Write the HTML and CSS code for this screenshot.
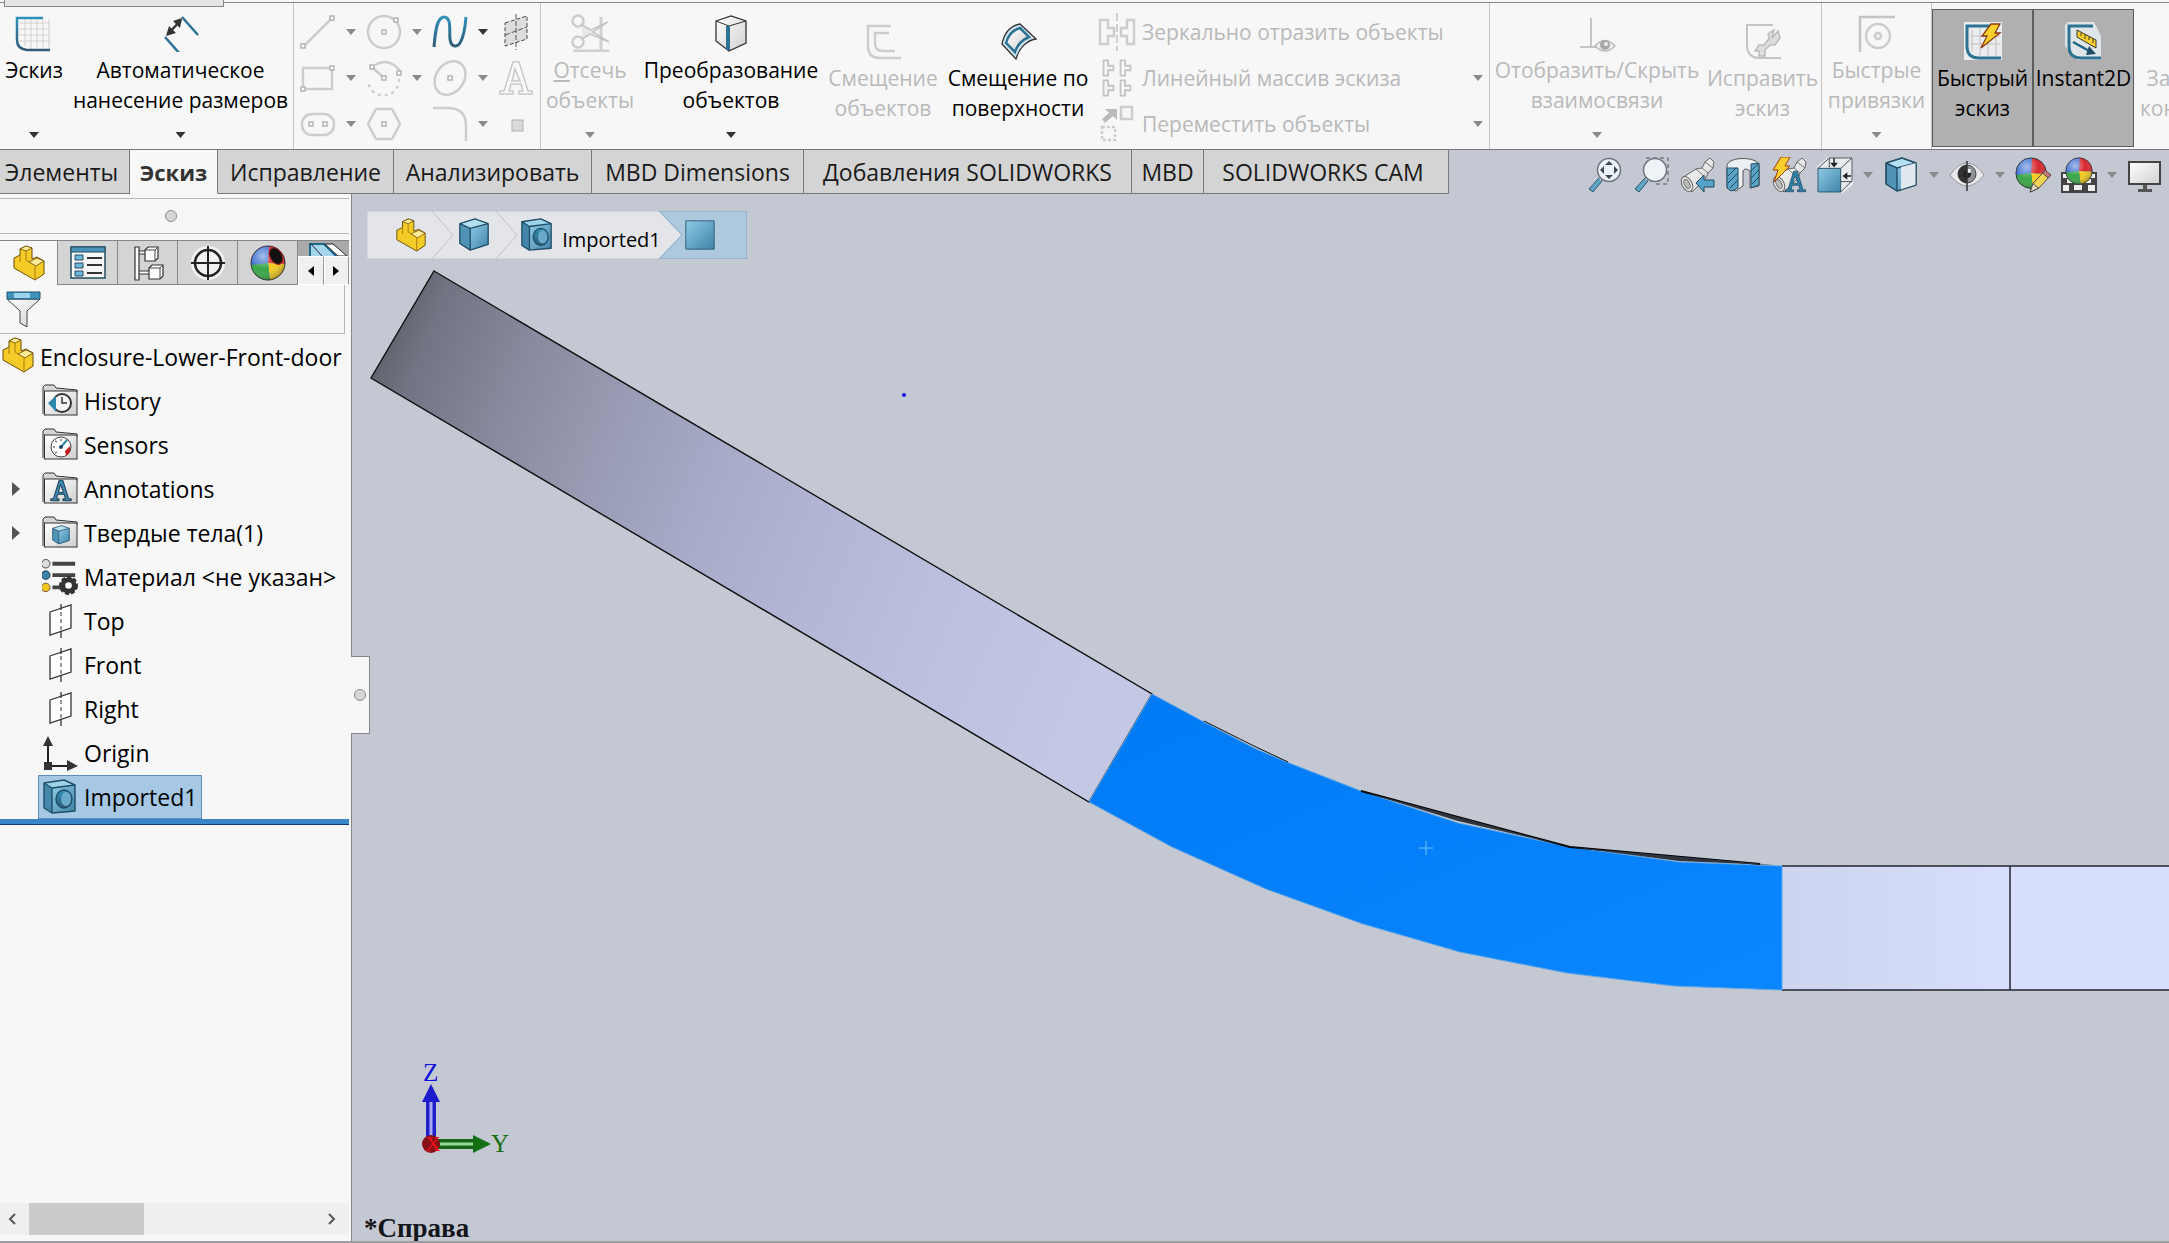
FILE: index.html
```html
<!DOCTYPE html>
<html lang="ru">
<head>
<meta charset="utf-8">
<title>SOLIDWORKS</title>
<link rel="stylesheet" href="styles.css">
</head>
<body>
<svg class="defs" aria-hidden="true">
  <defs>
    <linearGradient id="blue" x1="0" y1="0" x2="1" y2="1"><stop offset="0" stop-color="#8fcbe6"/><stop offset="1" stop-color="#3f83a8"/></linearGradient>
    <linearGradient id="stroke" x1="0" y1="0" x2="0" y2="1"><stop offset="0" stop-color="#3190b8"/><stop offset="1" stop-color="#2f5b76"/></linearGradient>
    <linearGradient id="grey" x1="0" y1="0" x2="1" y2="1"><stop offset="0" stop-color="#ffffff"/><stop offset="1" stop-color="#d0d0d0"/></linearGradient>
    <linearGradient id="yellow" x1="0" y1="0" x2="1" y2="1"><stop offset="0" stop-color="#ffe98a"/><stop offset="1" stop-color="#eab308"/></linearGradient>
    <radialGradient id="shine" cx="0.35" cy="0.3" r="0.8"><stop offset="0" stop-color="#fff" stop-opacity="0.55"/><stop offset="0.5" stop-color="#fff" stop-opacity="0"/><stop offset="1" stop-color="#000" stop-opacity="0.4"/></radialGradient>
  </defs>
  <symbol id="part" viewBox="0 0 36 36">
    <path d="M3 13l6-3V4l6-3 6 2v11l5-2 7 4v13l-9 6L3 23z" fill="#f5cb28" stroke="#6b4e08" stroke-linejoin="round"/>
    <path d="M9 4l6-3 6 2-6 3zM18 17l8-4 7 3-8 5z" fill="#ffeb96" stroke="#6b4e08" stroke-width="0.8"/>
    <path d="M9 10v7M15 6v9l3 2M24 21v14" fill="none" stroke="#a87d0c"/>
  </symbol>
  <symbol id="cube" viewBox="0 0 36 36">
    <path d="M3 6l11 5v23L3 27z" fill="#4f93b6"/><path d="M14 11l19-5v22l-19 6z" fill="url(#blue)"/><path d="M3 6l16-5 14 5-19 5z" fill="#b4e1f1"/>
    <path d="M3 6l16-5 14 5v22l-19 6L3 27zM3 6l11 5 19-5M14 11v23" fill="none" stroke="#1f4c66" stroke-width="1.4" stroke-linejoin="round"/>
  </symbol>
  <symbol id="imported" viewBox="0 0 36 36">
    <path d="M2 4l8 5v25l-8-5z" fill="#4587aa"/><path d="M10 9l23-3v26l-23 2z" fill="url(#blue)"/><path d="M2 4l20-3 11 5-23 3z" fill="#9dd3ea"/>
    <path d="M2 4l20-3 11 5v26l-23 2-8-5zM2 4l8 5 23-3M10 9v25" fill="none" stroke="#1f4c66" stroke-width="1.4" stroke-linejoin="round"/>
    <ellipse cx="22" cy="20" rx="8" ry="9" fill="url(#stroke)" stroke="#1f4c66" stroke-width="1.4"/><ellipse cx="24" cy="20" rx="5" ry="7" fill="#69a9c9"/>
  </symbol>
  <symbol id="folder" viewBox="0 0 36 36">
    <path d="M1 31V4l2-2h9l2 3 21 2v3H3" fill="#d6d6d6" stroke="#333"/><rect x="2.500" y="8" width="32.500" height="24" fill="url(#grey)" stroke="#333"/>
  </symbol>
  <symbol id="plane" viewBox="0 0 36 36">
    <path d="M8 9l21-7v23L8 32z" fill="#fff" stroke="#333" stroke-width="1.300"/><path d="M19 1v6M19 28v7" stroke="#333" stroke-width="1.300"/><path d="M19 9v18" stroke="#333" stroke-dasharray="4 3"/>
  </symbol>
  <symbol id="ball" viewBox="0 0 36 36">
    <circle cx="18" cy="18" r="17" fill="#3c6fd0"/>
    <path d="M18 18L19 1a17 17 0 0 1 16 18z" fill="#d8272d"/><path d="M18 18l17 1a17 17 0 0 1-15 16z" fill="#f3cb1e"/><path d="M18 18l2 17A17 17 0 0 1 1 20z" fill="#36a545"/>
    <circle cx="18" cy="18" r="17" fill="url(#shine)" stroke="#333"/>
  </symbol>
  <symbol id="lens" viewBox="0 0 36 36">
    <path d="M12 21l3 3L6 35l-4-3z" fill="#5fa6c6" stroke="#2d5468"/><path d="M12 21l3-3 2 2-3 4" fill="#ddd" stroke="#777"/>
    <circle cx="22" cy="13" r="11.500" fill="#eef3f7" stroke="#6e7680" stroke-width="1.500"/>
  </symbol>
  <symbol id="spyglass" viewBox="0 0 36 36">
    <path d="M3 21L17 12l6-1 3-6 5-4 4 4-1 6-5 5-2 5-14 14z" fill="url(#grey)" stroke="#666"/><ellipse cx="8" cy="27" rx="5" ry="8" transform="rotate(-28 8 27)" fill="#ececec" stroke="#666"/><ellipse cx="8" cy="27" rx="2.500" ry="5" transform="rotate(-28 8 27)" fill="#bbb" stroke="#777"/><path d="M17 12l10 9M23 11l6 5M26 5l8 6" stroke="#777"/>
  </symbol>
  <symbol id="letter-a" viewBox="0 0 36 36">
    <path fill-rule="evenodd" d="M15 2h6l9 29h4v3H21v-3h4l-2-7H13l-2 7h4v3H2v-3h4zM17 9l-3 12h8z"/>
  </symbol>
  <symbol id="tee" viewBox="0 0 14 20"><path d="M1.500 1.500h5v6h6v5h-6v6h-5z" fill="none" stroke="currentColor" stroke-width="2"/></symbol>
</svg>

<header class="ribbon" role="toolbar" aria-label="Эскиз">
  <div class="doc-tab"></div>
  <button class="tool w-sketch"><svg class="ico" viewBox="0 0 38 38"><path d="M10 5v27M16 5v30M22 5v30M28 5v30M34 5v30M4 9h31M4 15h31M4 21h31M4 27h31" stroke="#d5cfcf"/><path d="M28 4H2v22q0 9 10 10h23" fill="none" stroke="url(#stroke)" stroke-width="2.500"/></svg><span>Эскиз</span><i class="caret"></i></button>
  <button class="tool w-dim"><svg class="ico" viewBox="0 0 38 38"><path d="M20 3l16 18M3 23l15 17" stroke="#2d7292" stroke-width="2.500"/><path d="M6 20L19 6" stroke="#333" stroke-width="2.500"/><path d="M20 4l-2 10-7-7zM4 22l3-10 7 7z" fill="#333"/></svg><span>Автоматическое<br>нанесение размеров</span><i class="caret"></i></button>
  <div class="sketch-grid">
    <button class="mini off" aria-label="Линия"><svg viewBox="0 0 36 36"><path d="M4 32L31 5" class="g"/><path d="M1 30h4v4H1zM30 2h4v4h-4z" class="h"/></svg><i class="caret"></i></button>
    <button class="mini off" aria-label="Окружность"><svg viewBox="0 0 36 36"><circle cx="18" cy="18" r="16" class="g"/><path d="M16 16h4v4h-4zM28 4h4v4h-4z" class="h"/></svg><i class="caret"></i></button>
    <button class="mini" aria-label="Сплайн"><svg viewBox="0 0 36 36"><path d="M2 33C3 22 4 3 12 3s5 15 6 22c1 9 8 9 11 2 4-8 4-15 5-24" fill="none" stroke="url(#stroke)" stroke-width="3"/></svg><i class="caret"></i></button>
    <button class="mini" aria-label="Плоскость"><svg viewBox="0 0 36 36"><path d="M7 9l22-7v23L7 32z" fill="#ddd" stroke="#444" stroke-dasharray="4 2"/><path d="M18 0v36M7 21l22-8" stroke="#555" stroke-dasharray="5 2"/></svg></button>
    <button class="mini off" aria-label="Прямоугольник"><svg viewBox="0 0 36 36"><path d="M3 8h29v21H3z" class="g"/><path d="M1 27h4v4H1zM30 6h4v4h-4z" class="h"/></svg><i class="caret"></i></button>
    <button class="mini off" aria-label="Дуга"><svg viewBox="0 0 36 36"><path d="M9 5q10-6 19 0 6 4 6 9M6 7l12 11" class="g"/><path d="M33 19a15 15 0 0 1-31 2" class="g" stroke-dasharray="3 4"/><path d="M16 16h4v4h-4zM4 5h4v4H4zM31 11h4v4h-4z" class="h"/></svg><i class="caret"></i></button>
    <button class="mini off" aria-label="Эллипс"><svg viewBox="0 0 36 36"><ellipse cx="18" cy="18" rx="14" ry="18" transform="rotate(35 18 18)" class="g"/><path d="M16 16h4v4h-4z" class="h"/></svg><i class="caret"></i></button>
    <button class="mini off" aria-label="Текст"><svg viewBox="0 0 36 36"><use href="#letter-a" fill="#fafafa" stroke="#c9c9c9" stroke-width="1.500"/></svg></button>
    <button class="mini off" aria-label="Паз"><svg viewBox="0 0 36 36"><rect x="2" y="8" width="32" height="21" rx="10" class="g"/><path d="M9 16h4v4H9zM23 16h4v4h-4z" class="h"/></svg><i class="caret"></i></button>
    <button class="mini off" aria-label="Многоугольник"><svg viewBox="0 0 36 36"><path d="M10 3h16l8 15-8 15H10L2 18z" class="g"/><path d="M16 16h4v4h-4z" class="h"/></svg></button>
    <button class="mini off" aria-label="Скругление"><svg viewBox="0 0 36 36"><path d="M1 2h15q18 0 18 18v15" class="g"/></svg><i class="caret"></i></button>
    <button class="mini off" aria-label="Точка"><svg viewBox="0 0 36 36"><rect x="14" y="14" width="11" height="11" fill="#d9d9d9" stroke="#b0b0b0"/></svg></button>
  </div>
  <button class="tool off w-trim"><svg class="ico" viewBox="0 0 38 38"><path d="M30 3v36M2 37h36" stroke="#d0d0d0" stroke-width="3"/><circle cx="7" cy="7" r="5.500" class="g"/><circle cx="7" cy="28" r="5.500" class="g"/><path d="M11 11l9 5L37 8 22 18l16 10-19-8-8 5" fill="#e8e8e8" stroke="#c4c4c4" stroke-width="1.500"/></svg><span><u>О</u>тсечь<br>объекты</span><i class="caret"></i></button>
  <button class="tool w-convert"><svg class="ico" viewBox="0 0 38 38"><path d="M4 7l15-5 15 5v22l-17 8L4 27z" fill="url(#grey)" stroke="#333" stroke-width="1.300"/><path d="M4 7l13 5 17-5" fill="none" stroke="#333"/><path d="M16 12v24" stroke="#2d7292" stroke-width="4"/></svg><span>Преобразование<br>объектов</span><i class="caret"></i></button>
  <button class="tool low off w-offset"><svg class="ico" viewBox="0 0 38 38"><path d="M27 4H4v20q0 12 12 12h21" class="g"/><path d="M25 11H11v10q0 8 8 8h12" class="g"/></svg><span>Смещение<br>объектов</span></button>
  <button class="tool low w-surface"><svg class="ico" viewBox="0 0 38 38"><path d="M3 22C5 12 11 4 21 2l16 15c-9 1-17 9-20 20z" fill="#cfe7f3" stroke="#333" stroke-width="1.300"/><path d="M7 21C9 14 14 8 21 6l9 9c-7 3-12 8-14 15z" fill="url(#grey)" stroke="#2d7292" stroke-width="2.500"/></svg><span>Смещение по<br>поверхности</span></button>
  <div class="list-tools off">
    <button class="row"><svg viewBox="0 0 38 38"><path d="M2 7h8v8h6v8h-6v8H2zM36 7h-7v8h-6v8h6v8h7z" class="g"/><path d="M19 0v38" stroke="#aaa" stroke-dasharray="8 3"/></svg><span>Зеркально отразить объекты</span></button>
    <button class="row"><svg viewBox="0 0 38 38" color="#c4c4c4"><use href="#tee" x="4" y="0" width="13" height="18"/><use href="#tee" x="21" y="0" width="13" height="18"/><use href="#tee" x="4" y="20" width="13" height="18"/><use href="#tee" x="21" y="20" width="13" height="18"/></svg><span>Линейный массив эскиза</span><i class="caret"></i></button>
    <button class="row"><svg viewBox="0 0 38 38"><path d="M23 2h11v12H23z" class="g"/><path d="M4 22h13v13H4z" class="g" stroke-dasharray="3 2"/><path d="M4 14l7-6-4-4h12v11l-4-4-8 7z" fill="#bbb"/></svg><span>Переместить объекты</span><i class="caret"></i></button>
  </div>
  <button class="tool off w-rel"><svg class="ico" viewBox="0 0 38 38"><path d="M13 4v29M2 33h20" stroke="#c4c4c4" stroke-width="2"/><path d="M17 32q10-11 20 0-10 10-20 0z" fill="#f0f0f0" stroke="#bbb" stroke-width="1.500"/><circle cx="27" cy="31" r="5" fill="#a8a8a8"/><circle cx="28" cy="30" r="2" fill="#eee"/></svg><span>Отобразить/Скрыть<br>взаимосвязи</span><i class="caret"></i></button>
  <button class="tool low off w-repair"><svg class="ico" viewBox="0 0 38 38"><path d="M29 3H3v20q0 13 13 13h21" fill="none" stroke="#c4c4c4" stroke-width="2"/><path d="M28 16l6-7 2 7-5 7-5 0-5 5v6l-6 0 0-5-4 0 4-6 5 0 5-6-1-5 6-4z" fill="#ddd" stroke="#bbb" stroke-width="1.500"/></svg><span>Исправить<br>эскиз</span></button>
  <button class="tool off w-snap"><svg class="ico" viewBox="0 0 38 38"><path d="M2 39V3h35" fill="none" stroke="#c4c4c4" stroke-width="2.500"/><circle cx="20" cy="22" r="12" class="g"/><circle cx="20" cy="22" r="3" class="g"/></svg><span>Быстрые<br>привязки</span><i class="caret"></i></button>
  <button class="tool low on w-quick" aria-pressed="true"><svg class="ico" viewBox="0 0 38 38"><path d="M0 0h38v38H0z" fill="#e9edef"/><path d="M8 8v22M16 6v28M24 6v28M32 6v28M6 14h30M6 22h30" stroke="#c9bcbc"/><path d="M29 4H3v20q0 12 12 12h22" fill="none" stroke="#2d7292" stroke-width="3"/><path d="M27 2h9l-5 9h5L17 26l6-12h-5z" fill="#fbd02c" stroke="#8a3a10" stroke-width="1.300"/></svg><span>Быстрый<br>эскиз</span></button>
  <button class="tool low on w-instant" aria-pressed="true"><svg class="ico" viewBox="0 0 38 38"><path d="M3 0h26l7 14v24H12L0 24V3z" fill="#e0e5e8"/><path d="M28 4H4v20q0 12 12 12h20" fill="none" stroke="#2d7292" stroke-width="3"/><path d="M12 8l19 10v8L12 15z" fill="#fbd02c" stroke="#333"/><path d="M16 11v3M20 13v4M24 15v3M28 17v4" stroke="#333"/><path d="M8 20l18 10" stroke="#1f6688" stroke-width="2.500"/><path d="M24 24l7 8-10 1z" fill="#1f4c66"/></svg><span>Instant2D</span></button>
  <button class="tool low off w-last"><span class="ico"></span><span>За<br>кон</span></button>
</header>

<div class="tab-row">
  <nav class="tabs" role="tablist">
    <button role="tab" class="t1">Элементы</button><button role="tab" class="t2 active" aria-selected="true">Эскиз</button><button role="tab" class="t3">Исправление</button><button role="tab" class="t4">Анализировать</button><button role="tab" class="t5">MBD Dimensions</button><button role="tab" class="t6">Добавления SOLIDWORKS</button><button role="tab" class="t7">MBD</button><button role="tab" class="t8">SOLIDWORKS CAM</button>
  </nav>
  <div class="view-tools" role="toolbar" aria-label="Вид">
    <button aria-label="Во весь экран"><svg viewBox="0 0 36 36"><use href="#lens"/><path d="M22 4l4 4h-8zM22 22l4-4h-8zM13 13l4-4v8zM31 13l-4-4v8z" fill="#3c4a58"/></svg></button>
    <button aria-label="Увеличить область"><svg viewBox="0 0 36 36"><path d="M13 1h22v26H22" fill="none" stroke="#555" stroke-dasharray="4 3"/><use href="#lens"/></svg></button>
    <button aria-label="Предыдущий вид"><svg viewBox="0 0 36 36"><use href="#spyglass"/><path d="M17 26l8-8v5h10v7H25v5z" fill="#55a2c8" stroke="#234b60"/></svg></button>
    <button aria-label="Разрез"><svg viewBox="0 0 36 36"><path d="M2 9c0-10 32-10 32 0v20l-9 2V14q-5-4-7 0v15l-7 5-9-3z" fill="#eaf0f3" stroke="#555"/><path d="M2 11h11v20l-7 3-4-3zM26 7l8-1v22l-8 3z" fill="#58a3c6" stroke="#234b60"/><path d="M3 19l8-8M3 26l10-10M5 31l8-8M26 14l7-7M26 21l8-8M27 27l7-7" stroke="#234b60"/></svg></button>
    <button aria-label="Динамические виды"><svg viewBox="0 0 36 36"><use href="#spyglass"/><path d="M10 0h9l-5 9h5L3 25l4-12H2z" fill="#fbd02c" stroke="#a33c12"/><use href="#letter-a" x="13" y="13" width="23" height="23" fill="#2f7ea6" stroke="#1b4560"/></svg></button>
    <button aria-label="Ориентация вида"><svg viewBox="0 0 38 38"><path d="M0 10L12 0h26v29l-11 9H0z" fill="#e6ebf0"/><path d="M1 12h24v25H1z" fill="url(#blue)" stroke="#234b60"/><path d="M1 12L13 1h24v24L25 37M25 12L37 1M13 1v10M25 26h12" fill="none" stroke="#444"/><path d="M18 1v8M36 20h-7" stroke="#222" stroke-width="1.500"/><path d="M14 6h8l-4 5zM32 16v8l-5-4z" fill="#222"/></svg></button>
    <button class="more" aria-label="Ещё"><i class="caret"></i></button>
    <button aria-label="Стиль отображения"><svg viewBox="0 0 36 36"><use href="#cube"/><path d="M18 10l15-4v22l-15 5z" fill="#dfe8ee"/><path d="M3 6l16-5 14 5v22l-19 6L3 27z" fill="none" stroke="#2c5064"/></svg></button>
    <button class="more" aria-label="Ещё"><i class="caret"></i></button>
    <button aria-label="Скрыть элементы"><svg viewBox="0 0 36 36"><path d="M1 18Q18-6 35 18 18 40 1 18z" fill="#e9e9ec" stroke="#999"/><circle cx="18" cy="17" r="9" fill="#8f9298" stroke="#444"/><path d="M18 8a9 9 0 0 0 0 18z" fill="#333"/><circle cx="18" cy="17" r="4" fill="#222"/><circle cx="20" cy="14" r="2" fill="#fff"/><path d="M18 4v30" stroke="#333" stroke-width="1.500"/></svg></button>
    <button class="more" aria-label="Ещё"><i class="caret"></i></button>
    <button aria-label="Внешний вид"><svg viewBox="0 0 38 38"><use href="#ball" width="34" height="34"/><path d="M16 37l3-9 12-13 6 5-12 13z" fill="#f3d556" stroke="#444"/><path d="M29 17l3-3 6 5-3 3z" fill="#c77" stroke="#444"/><path d="M16 37l3-9 6 5z" fill="#e8d9c0" stroke="#444"/></svg></button>
    <button aria-label="Сцена"><svg viewBox="0 0 36 36"><path d="M0 15h36v21H0z" fill="#444"/><path d="M2 17h6v4H2zM28 17h6v4h-6zM6 22h5v4H6zM25 22h5v4h-5zM2 28h6v6H2zM13 28h8v5h-8zM27 28h7v6h-7z" fill="#eee"/><use href="#ball" x="4" y="0" width="28" height="28"/></svg></button>
    <button class="more" aria-label="Ещё"><i class="caret"></i></button>
    <button aria-label="Параметры вида"><svg viewBox="0 0 36 36"><path d="M2 5h31v22H2z" fill="url(#grey)" stroke="#444" stroke-width="2"/><path d="M16 28h4v4h5v3H11v-3h5z" fill="#555"/></svg></button>
  </div>
</div>

<main>
  <aside class="panel">
    <div class="grip"><i class="knob"></i></div>
    <div class="panel-tabs" role="tablist">
      <button role="tab" class="active" aria-label="Дерево"><svg viewBox="0 0 36 36"><use href="#part"/></svg></button>
      <button role="tab" aria-label="Свойства"><svg viewBox="0 0 36 36"><path d="M1 2h34v31H1z" fill="#f7f7f7" stroke="#234b60" stroke-width="1.500"/><path d="M1 2h34v5H1z" fill="#4a93b8" stroke="#234b60"/><path d="M5 10h8v5H5zM5 18h8v5H5zM5 26h8v5H5z" fill="#6cb8dc" stroke="#234b60"/><path d="M17 13h15M17 20h15M17 28h15" stroke="#333" stroke-width="2"/></svg></button>
      <button role="tab" aria-label="Конфигурации"><svg viewBox="0 0 36 36"><path d="M5 2h4v33H5zM9 6h8v3H9zM9 26h11v3H9z" fill="#fff" stroke="#333" stroke-width="1.200"/><path d="M15 5l3-3h10v11l-3 3H15zM19 23l3-3h11v11l-3 3H19z" fill="#fff" stroke="#333" stroke-width="1.200"/><path d="M15 5h10l3-3M25 5v11M19 23h11l3-3M30 23v11" fill="none" stroke="#444"/></svg></button>
      <button role="tab" aria-label="Размеры"><svg viewBox="0 0 36 36"><circle cx="18" cy="18" r="17" fill="#f1f1f1"/><circle cx="18" cy="18" r="13" fill="none" stroke="#222" stroke-width="2.500"/><path d="M18 1v34M1 18h34" stroke="#222" stroke-width="2"/></svg></button>
      <button role="tab" aria-label="Отображение"><svg viewBox="0 0 36 36"><use href="#ball"/><ellipse cx="26" cy="11" rx="6" ry="9" transform="rotate(-30 26 11)" fill="#111" stroke="#a22"/></svg></button>
      <div class="scroller">
        <svg viewBox="0 0 40 14"><path d="M1 14V2h14l12 12" fill="#a5d5ec" stroke="#1f6688" stroke-width="2"/><path d="M16 2h8l14 12h-9zM2 2l11 12" fill="#fff" stroke="#222"/></svg>
        <div><button aria-label="Назад"><svg viewBox="0 0 8 10"><path d="M7 0v10L1 5z"/></svg></button><button aria-label="Вперёд"><svg viewBox="0 0 8 10"><path d="M1 0v10l6-5z"/></svg></button></div>
      </div>
    </div>
    <label class="filter"><svg viewBox="0 0 36 36"><path d="M1 8l13 12v12l7 4V20L34 8z" fill="url(#grey)" stroke="#444"/><path d="M1 1h33v7H1z" fill="#3f93bb" stroke="#1d5572"/><path d="M8 2h16v5H8z" fill="#9bd3ea"/></svg><input type="text" aria-label="Фильтр"></label>
    <ul class="tree">
      <li class="root"><svg viewBox="0 0 36 36"><use href="#part"/></svg><span>Enclosure-Lower-Front-door</span></li>
      <li><i></i><svg viewBox="0 0 36 36"><use href="#folder"/><circle cx="20" cy="20" r="9" fill="#f4f4f4" stroke="#333" stroke-width="2"/><path d="M20 14v6h5" fill="none" stroke="#333" stroke-width="1.500"/><path d="M14 13v16L6 20z" fill="#2f86ab"/></svg><span>History</span></li>
      <li><i></i><svg viewBox="0 0 36 36"><use href="#folder"/><circle cx="19" cy="20" r="10" fill="#fff" stroke="#444"/><path d="M19 20l6-7" stroke="#2f86ab" stroke-width="2"/><path d="M19 12v2M11 20h2M13 26l2-1M13 14l2 1" stroke="#333"/><path d="M28 19v6l-4 4-1-5z" fill="#c92020"/><circle cx="19" cy="20" r="2" fill="#234b60"/></svg><span>Sensors</span></li>
      <li><i><svg class="exp" viewBox="0 0 8 14"><path d="M0 0l8 7-8 7z"/></svg></i><svg viewBox="0 0 36 36"><use href="#folder"/><use href="#letter-a" x="7" y="8" width="24" height="23" fill="#3b83aa" stroke="#1b3d52" stroke-width="1.500"/></svg><span>Annotations</span></li>
      <li><i><svg class="exp" viewBox="0 0 8 14"><path d="M0 0l8 7-8 7z"/></svg></i><svg viewBox="0 0 36 36"><use href="#folder"/><use href="#cube" x="8" y="10" width="22" height="20"/></svg><span>Твердые тела(1)</span></li>
      <li><i></i><svg viewBox="0 0 38 38"><path d="M11 5h24M11 17h24M11 30h10" stroke="#444" stroke-width="4"/><circle cx="4" cy="5" r="4.500" fill="#ddd" stroke="#444"/><circle cx="4" cy="17" r="4.500" fill="#3b83aa" stroke="#234"/><circle cx="4" cy="30" r="4.500" fill="#f3c51e" stroke="#654"/><circle cx="28" cy="28" r="8" fill="none" stroke="#333" stroke-width="4" stroke-dasharray="4 2"/><circle cx="28" cy="28" r="6" fill="#fff" stroke="#333" stroke-width="5"/></svg><span>Материал &lt;не указан&gt;</span></li>
      <li><i></i><svg viewBox="0 0 36 36"><use href="#plane"/></svg><span>Top</span></li>
      <li><i></i><svg viewBox="0 0 36 36"><use href="#plane"/></svg><span>Front</span></li>
      <li><i></i><svg viewBox="0 0 36 36"><use href="#plane"/></svg><span>Right</span></li>
      <li><i></i><svg viewBox="0 0 36 36"><path d="M6 30V6M6 31h22" stroke="#222" stroke-width="2"/><path d="M6 1l5 10H1zM36 31l-11-6v11zM2 27h8v8H2z" fill="#333"/></svg><span>Origin</span></li>
      <li class="selected"><i></i><b><svg viewBox="0 0 36 36"><use href="#imported"/></svg><span>Imported1</span></b></li>
    </ul>
    <div class="rollback"></div>
    <div class="hscroll"><button aria-label="Влево"><svg viewBox="0 0 10 12"><path d="M8 1L3 6l5 5"/></svg></button><i class="thumb"></i><button aria-label="Вправо"><svg viewBox="0 0 10 12"><path d="M2 1l5 5-5 5"/></svg></button></div>
    <button class="splitter" aria-label="Свернуть панель"><i class="knob"></i></button>
  </aside>

  <section class="viewport" aria-label="Модель">
    <svg class="model">
      <defs>
        <linearGradient id="arm" gradientUnits="userSpaceOnUse" x1="40" y1="125" x2="765" y2="420">
          <stop offset="0" stop-color="#5f616c"/><stop offset="0.05" stop-color="#727483"/><stop offset="0.18" stop-color="#888b9f"/><stop offset="0.32" stop-color="#999cb4"/><stop offset="0.46" stop-color="#a7abc8"/><stop offset="0.58" stop-color="#b0b4d2"/><stop offset="0.78" stop-color="#bac0de"/><stop offset="1" stop-color="#c3c8e4"/>
        </linearGradient>
        <linearGradient id="sel" x1="0" y1="0" x2="1" y2="1"><stop offset="0" stop-color="#007af5"/><stop offset="1" stop-color="#0a86ff"/></linearGradient>
        <linearGradient id="flat" x1="0" x2="1"><stop offset="0" stop-color="#cdd4ef"/><stop offset="1" stop-color="#d8dffc"/></linearGradient>
      </defs>
      <path d="M82 77l718 423-63 108L19 184z" fill="url(#arm)" stroke="#111" stroke-width="1.400"/>
      <rect x="1430" y="672" width="228" height="124" fill="url(#flat)"/>
      <rect x="1658" y="672" width="4000" height="124" fill="#d8dffc"/>
      <path d="M1430 672h4000M1430 796h4000M1658 672v124" stroke="#222632" stroke-width="1.500"/>
      <path d="M800 500L852 528 902 554 932 567 1009 597 1106 629 1218 653 1327 668 1430 672V796L1322 792 1215 779 1108 758 1011 730 914 695 820 653 737 608z" fill="url(#sel)" stroke="#5aa5e8"/>
      <path d="M852 527l50 25 34 16" fill="none" stroke="#111"/>
      <path d="M1009 597l209 56M1218 653l190 17" stroke="#000" stroke-width="2"/>
      <path d="M1009 597l97 30 112 26zM1218 653l109 14 95 4z" fill="#30343c"/>
      <path d="M1067 654h14M1074 647v14" stroke="#6cc0ff"/>
      <circle cx="552" cy="201" r="2" fill="#1010e0"/>
      <path d="M74 946V908h10v38z" fill="#2020c8"/><path d="M79 946V906" stroke="#a6a6ff" stroke-width="3"/><path d="M79 890l9 18H70z" fill="#1c1ccc"/>
      <path d="M84 945h38v10H84z" fill="#176417"/><path d="M88 950h34" stroke="#98d898" stroke-width="3"/><path d="M121 941l18 9-18 9z" fill="#147014"/>
      <circle cx="79" cy="950" r="9" fill="#861216"/>
      <text x="71" y="887" class="axis z">Z</text><text x="73" y="957" class="axis x">X</text><text x="139" y="958" class="axis y">Y</text>
    </svg>
    <nav class="crumbs" aria-label="Путь">
      <a href="#"><svg viewBox="0 0 36 36"><use href="#part"/></svg></a>
      <a href="#"><svg viewBox="0 0 36 36"><use href="#cube"/></svg></a>
      <a href="#"><svg viewBox="0 0 36 36"><use href="#imported"/></svg><span>Imported1</span></a>
      <a href="#" class="current" aria-label="Грань"><svg viewBox="0 0 36 36"><path d="M3 3h30v30H3z" fill="url(#blue)" stroke="#2b5b75"/></svg></a>
      <svg class="chevrons" viewBox="0 0 380 48"><path d="M65 0l21 24-21 24M129 0l21 24-21 24" fill="none" stroke="#c0c2c8"/><path d="M292 0h88v48h-88l23-24z" fill="#aec8de" stroke="#7fa3c2"/></svg>
    </nav>
    <div class="view-name">*Справа</div>
  </section>
</main>
</body>
</html>
```
FILE: styles.css
```css
* { box-sizing: border-box; }

body {
  margin: 0;
  height: 100vh;
  display: flex;
  flex-direction: column;
  overflow: hidden;
  background: #c4c8d2;
  color: #000;
  font: 23px/30px "Open Sans", "Noto Sans", sans-serif;
}

button {
  border: 0;
  margin: 0;
  padding: 0;
  background: none;
  color: inherit;
  font: inherit;
}

svg { display: block; flex: none; }
.defs { position: absolute; width: 0; height: 0; }

.caret {
  flex: none;
  width: 10px;
  height: 6px;
  background: #333;
  clip-path: polygon(0 0, 100% 0, 50% 100%);
}
.off .caret, .more .caret { background: #8a8a8a; }
.g { fill: none; stroke: #cdcdcd; stroke-width: 2.5; }
.h { fill: #fff; stroke: #b4b4b4; stroke-width: 1.5; }

/* Ribbon */
.ribbon {
  position: relative;
  flex: none;
  display: flex;
  height: 150px;
  padding-top: 3px;
  overflow: hidden;
  background: linear-gradient(#f7f7f7 2px, #85888a 2px, #85888a 3px, #f7f7f7 3px);
  border-bottom: 1px solid #777a7c;
  font-size: 21px;
}
.doc-tab {
  position: absolute;
  left: 4px;
  top: -2px;
  width: 220px;
  height: 9px;
  background: #e6e6e6;
  border: 1px solid #888;
}
.tool {
  flex: none;
  display: flex;
  flex-direction: column;
  align-items: center;
  padding: 11px 0;
  text-align: center;
  white-space: nowrap;
}
.tool .ico { width: 38px; height: 38px; flex: none; margin-bottom: 3px; }
.tool .caret { margin-top: auto; }
.tool.low { padding-top: 19px; }
.tool.off, .off { color: #b9b9b9; }
.tool.on {
  margin: 6px 0 2px;
  padding-top: 12px;
  background: #b0b0b0;
  border: 1px solid #5d5d5d;
}
.w-sketch { width: 68px; }
.w-dim { width: 226px; border-right: 1px solid #c4c4c4; }
.w-trim { width: 98px; }
.w-convert { width: 184px; }
.w-offset { width: 120px; }
.w-surface { width: 150px; }
.w-rel { width: 214px; }
.w-repair { width: 118px; border-right: 1px solid #c4c4c4; }
.w-snap { width: 110px; border-right: 1px solid #c4c4c4; }
.w-quick { width: 101px; }
.w-instant { width: 101px; }
.tool.w-last { padding-left: 6px; align-items: flex-start; }

.sketch-grid {
  flex: none;
  display: grid;
  grid-template-columns: 66px 66px 66px 36px;
  grid-auto-rows: 46px;
  padding: 6px 6px 0;
  border-right: 1px solid #c4c4c4;
}
.mini { display: flex; align-items: center; gap: 10px; }
.mini svg { width: 36px; height: 36px; }

.list-tools {
  flex: none;
  width: 397px;
  padding: 6px 6px 0 5px;
  border-right: 1px solid #c4c4c4;
}
.row {
  display: flex;
  align-items: center;
  width: 100%;
  height: 46px;
  gap: 6px;
  white-space: nowrap;
}
.row svg { width: 38px; height: 38px; }
.row .caret { margin-left: auto; }

/* Command tabs and view toolbar */
.tab-row {
  flex: none;
  display: flex;
  justify-content: space-between;
  height: 44px;
}
.tabs { display: flex; flex: none; }
.tabs button {
  border-right: 1px solid #777a7c;
  border-bottom: 1px solid #777a7c;
  background: #d4d4d4;
  color: #1a1a1a;
  text-align: center;
  white-space: nowrap;
}
.tabs .active { background: #f7f7f7; border-bottom-color: #f7f7f7; font-size: 22px; font-weight: 700; color: #333; }
.tabs .t1 { width: 130px; padding-right: 6px; }
.t2 { width: 88px; }
.t3 { width: 176px; }
.t4 { width: 198px; }
.t5 { width: 212px; }
.t6 { width: 328px; }
.t7 { width: 72px; }
.tabs .t8 { width: 245px; padding-right: 6px; }

.view-tools { display: flex; padding: 6px 1px 0 0; }
.view-tools button {
  display: grid;
  place-items: center;
  width: 46px;
}
.view-tools .more { width: 20px; }
.view-tools svg { width: 36px; height: 36px; }

/* Feature tree panel */
main { flex: 1; min-height: 0; display: flex; border-bottom: 2px solid #9a9ca0; }
.panel {
  position: relative;
  flex: none;
  display: flex;
  flex-direction: column;
  width: 352px;
  padding: 4px 2px 6px 0;
  background: #f7f7f7;
  border-right: 1px solid #85888a;
}
.knob {
  display: block;
  width: 12px;
  height: 12px;
  border: 1px solid #8a8a8a;
  border-radius: 50%;
  background: #d6d6d6;
}
.grip {
  flex: none;
  display: grid;
  place-items: center;
  height: 36px;
  padding-right: 7px;
  border: solid #b5b8b8;
  border-width: 1px 0;
}
.panel-tabs {
  flex: none;
  display: flex;
  height: 45px;
  margin-top: 6px;
  background: #d4d4d4;
  border-top: 1px solid #85888a;
}
.panel-tabs > button {
  display: grid;
  place-items: center;
  width: 60px;
  border-right: 1px solid #85888a;
  border-bottom: 1px solid #85888a;
}
.panel-tabs > .active { width: 58px; background: #f7f7f7; border-bottom: 0; }
.panel-tabs > button > svg { width: 36px; height: 36px; }
.scroller { flex: 1; display: flex; flex-direction: column; background: #aaa; }
.scroller > svg { width: 40px; height: 14px; margin: 1px 0 0 11px; }
.scroller > div { flex: 1; display: flex; }
.scroller button {
  flex: 1;
  display: grid;
  place-items: center;
  background: #f0f0f0;
  border: 1px solid #fff;
  border-right-color: #999;
}
.scroller button svg { width: 8px; height: 10px; }
.filter {
  flex: none;
  display: flex;
  align-items: center;
  height: 49px;
  margin-right: 4px;
  padding-left: 6px;
  border: solid #b5b8b8;
  border-width: 0 1px 1px 0;
}
.filter svg { width: 36px; height: 36px; }
.filter input { flex: 1; min-width: 0; border: 0; background: none; font: inherit; outline: 0; }

.tree { flex: none; margin: 0; padding: 1px 0 0; list-style: none; }
.tree li { display: flex; align-items: center; height: 44px; white-space: nowrap; }
.tree li > i { flex: none; width: 42px; padding-left: 12px; }
.tree svg { width: 36px; height: 36px; }
.tree .exp { width: 8px; height: 14px; fill: #555; }
.tree span { margin-left: 6px; }
.tree .root svg { margin-bottom: 4px; }
.tree .root span { margin-left: 4px; }
.tree .selected i { width: 38px; }
.tree .selected b {
  display: flex;
  align-items: center;
  height: 44px;
  padding: 0 4px 0 3px;
  background: #a6c8e4;
  border: 1px solid #5f8fb8;
  font-weight: 400;
}
.rollback { flex: none; height: 6px; background: #3a86c8; border-bottom: 1px solid #14387c; }
.hscroll {
  flex: none;
  display: flex;
  align-items: center;
  height: 32px;
  margin-top: auto;
  background: #efefef;
}
.hscroll button { width: 29px; padding-right: 6px; display: grid; place-items: center; }
.hscroll button:last-child { margin-left: auto; }
.hscroll svg { width: 10px; height: 12px; fill: none; stroke: #555; stroke-width: 2; }
.thumb { width: 115px; height: 32px; background: #cbcbcb; }
.splitter {
  position: absolute;
  z-index: 1;
  right: -19px;
  top: 462px;
  width: 19px;
  height: 78px;
  display: grid;
  place-items: center;
  background: #f7f7f7;
  border: 1px solid #85888a;
  border-left: 0;
}

/* Graphics area */
.viewport { position: relative; flex: 1; min-width: 0; overflow: hidden; background: #c4c8d2; }
.model { position: absolute; inset: 0; width: 100%; height: 100%; }
.axis { font: 25px "Liberation Serif", serif; }
.z { fill: #1010e0; }
.x { fill: #f01020; font-size: 22px; }
.y { fill: #147014; }
.crumbs {
  position: absolute;
  left: 15px;
  top: 17px;
  display: flex;
  width: 380px;
  height: 48px;
  background: #e3e5e9;
  border: 1px solid #d3d5da;
}
.crumbs a {
  z-index: 1;
  display: flex;
  align-items: center;
  width: 64px;
  color: #000;
  text-decoration: none;
}
.crumbs a svg { width: 34px; height: 34px; }
.crumbs a:nth-child(1) { width: 90px; padding-left: 26px; }
.crumbs a:nth-child(2) { width: 64px; }
.crumbs a:nth-child(3) { width: 165px; }
.crumbs span { margin: 10px 0 0 8px; font-size: 20px; }
.chevrons { position: absolute; left: -1px; top: -1px; width: 380px; height: 48px; }
.view-name {
  position: absolute;
  left: 12px;
  bottom: 1px;
  color: #14161c;
  font: bold 27px/24px "Liberation Serif", serif;
}
```
